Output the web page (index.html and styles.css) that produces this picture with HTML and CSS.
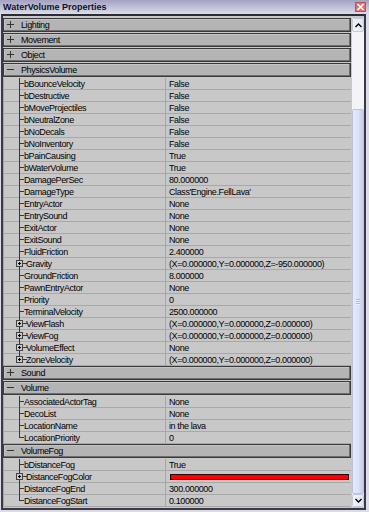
FILE: index.html
```html
<!DOCTYPE html>
<html lang="en">
<head>
    <meta charset="UTF-8">
    <title>WaterVolume Properties</title>
    <link rel="stylesheet" href="styles.css">
</head>
<body>
    <div class="titlebar">
        <span class="title">WaterVolume Properties</span>
        <span class="close"><svg width="9" height="8" viewBox="0 0 9 8"><path d="M1.5 1l6 6M7.5 1l-6 6" stroke="#fff" stroke-width="1.6"/></svg></span>
    </div>

    <div class="panel">
        <div class="grid">
            <div class="cat"><svg class="sign" width="8" height="8"><path d="M0 3.5h7M3.5 0v7" stroke="#333"/></svg>Lighting</div>
            <div class="cat"><svg class="sign" width="8" height="8"><path d="M0 3.5h7M3.5 0v7" stroke="#333"/></svg>Movement</div>
            <div class="cat"><svg class="sign" width="8" height="8"><path d="M0 3.5h7M3.5 0v7" stroke="#333"/></svg>Object</div>
            <div class="cat"><svg class="sign" width="8" height="8"><path d="M0 3.5h7" stroke="#333"/></svg>PhysicsVolume</div>

            <div class="row"><div class="name">bBounceVelocity</div><div class="val">False</div></div>
            <div class="row"><div class="name">bDestructive</div><div class="val">False</div></div>
            <div class="row"><div class="name">bMoveProjectiles</div><div class="val">False</div></div>
            <div class="row"><div class="name">bNeutralZone</div><div class="val">False</div></div>
            <div class="row"><div class="name">bNoDecals</div><div class="val">False</div></div>
            <div class="row"><div class="name">bNoInventory</div><div class="val">False</div></div>
            <div class="row"><div class="name">bPainCausing</div><div class="val">True</div></div>
            <div class="row"><div class="name">bWaterVolume</div><div class="val">True</div></div>
            <div class="row"><div class="name">DamagePerSec</div><div class="val">80.000000</div></div>
            <div class="row"><div class="name">DamageType</div><div class="val">Class'Engine.FellLava'</div></div>
            <div class="row"><div class="name">EntryActor</div><div class="val">None</div></div>
            <div class="row"><div class="name">EntrySound</div><div class="val">None</div></div>
            <div class="row"><div class="name">ExitActor</div><div class="val">None</div></div>
            <div class="row"><div class="name">ExitSound</div><div class="val">None</div></div>
            <div class="row"><div class="name">FluidFriction</div><div class="val">2.400000</div></div>
            <div class="row exp"><div class="name"><span class="box"></span>Gravity</div><div class="val">(X=0.000000,Y=0.000000,Z=-950.000000)</div></div>
            <div class="row"><div class="name">GroundFriction</div><div class="val">8.000000</div></div>
            <div class="row"><div class="name">PawnEntryActor</div><div class="val">None</div></div>
            <div class="row"><div class="name">Priority</div><div class="val">0</div></div>
            <div class="row"><div class="name">TerminalVelocity</div><div class="val">2500.000000</div></div>
            <div class="row exp"><div class="name"><span class="box"></span>ViewFlash</div><div class="val">(X=0.000000,Y=0.000000,Z=0.000000)</div></div>
            <div class="row exp"><div class="name"><span class="box"></span>ViewFog</div><div class="val">(X=0.000000,Y=0.000000,Z=0.000000)</div></div>
            <div class="row exp"><div class="name"><span class="box"></span>VolumeEffect</div><div class="val">None</div></div>
            <div class="row exp last"><div class="name"><span class="box"></span>ZoneVelocity</div><div class="val">(X=0.000000,Y=0.000000,Z=0.000000)</div></div>

            <div class="cat"><svg class="sign" width="8" height="8"><path d="M0 3.5h7M3.5 0v7" stroke="#333"/></svg>Sound</div>
            <div class="cat"><svg class="sign" width="8" height="8"><path d="M0 3.5h7" stroke="#333"/></svg>Volume</div>

            <div class="row"><div class="name">AssociatedActorTag</div><div class="val">None</div></div>
            <div class="row"><div class="name">DecoList</div><div class="val">None</div></div>
            <div class="row"><div class="name">LocationName</div><div class="val">in the lava</div></div>
            <div class="row last"><div class="name">LocationPriority</div><div class="val">0</div></div>

            <div class="cat"><svg class="sign" width="8" height="8"><path d="M0 3.5h7" stroke="#333"/></svg>VolumeFog</div>

            <div class="row"><div class="name">bDistanceFog</div><div class="val">True</div></div>
            <div class="row exp"><div class="name"><span class="box"></span>DistanceFogColor</div><div class="val"><span class="color"></span></div></div>
            <div class="row"><div class="name">DistanceFogEnd</div><div class="val">300.000000</div></div>
            <div class="row last"><div class="name">DistanceFogStart</div><div class="val">0.100000</div></div>
        </div>

        <div class="scroll">
            <div class="btn"><svg width="7" height="5" viewBox="0 0 7 5"><path d="M0.5 4L3.5 1l3 3" fill="none" stroke="#000" stroke-width="1.4"/></svg></div>
            <div class="track">
                <div class="thumb"><span class="grip"></span></div>
            </div>
            <div class="btn"><svg width="7" height="5" viewBox="0 0 7 5"><path d="M0.5 1l3 3l3-3" fill="none" stroke="#000" stroke-width="1.4"/></svg></div>
        </div>
    </div>
</body>
</html>
```

FILE: styles.css
```css
body {
    margin: 0;
    background-color: #dcdce8;
    font-family: "Liberation Sans", Arial, sans-serif;
    font-size: 9px;
    letter-spacing: -0.4px;
    color: #000;
}
.titlebar {
    height: 14px;
    display: flex;
    align-items: center;
    padding-left: 3px;
    background: linear-gradient(#a2a2c2, #dcdcea);
}
.title {
    font-size: 9px;
    font-weight: bold;
    letter-spacing: 0;
    color: #101020;
}
.close {
    margin-left: auto;
    margin-right: 3px;
    width: 11px;
    height: 10px;
    box-sizing: border-box;
    display: flex;
    align-items: center;
    justify-content: center;
    background-color: #e27272;
    border: 1px solid #c45050;
}
.panel {
    display: flex;
    margin: 0 3px 2px 1px;
    padding: 2px 0 1px 0;
    border: 2px solid #3a3a44;
    border-top-color: #2c2c34;
    background-color: #c8c8c8;
}
.grid {
    width: 348px;
}
.cat {
    height: 14px;
    box-sizing: border-box;
    margin-bottom: 1px;
    display: flex;
    align-items: center;
    padding-left: 3px;
    border: 1px solid #3a3a3a;
    background-color: #b4b4b4;
    box-shadow: inset -1px -1px 0 #6e6e6e, inset 1px 1px 0 #c4c4c4;
}
.cat .sign {
    margin-right: 6px;
}
.row {
    display: flex;
    height: 12px;
}
.name {
    width: 163px;
    box-sizing: border-box;
    display: flex;
    align-items: center;
    padding-left: 20px;
    border-left: 1px solid #a6a6a6;
    border-right: 1px solid #a6a6a6;
    background:
        linear-gradient(#383838, #383838) 15px 0 / 1px 100% no-repeat,
        linear-gradient(#383838, #383838) 15px 5px / 5px 1px no-repeat,
        linear-gradient(#a8a8a8, #a8a8a8) 0 100% / 100% 1px no-repeat,
        #c8c8c8;
    white-space: nowrap;
}
.last .name {
    background-size: 1px 6px, 5px 1px, 100% 1px;
}
.exp .name {
    padding-left: 12px;
    background-size: 1px 100%, 8px 1px, 100% 1px;
}
.exp.last .name {
    background-size: 1px 6px, 8px 1px, 100% 1px;
}
.box {
    width: 7px;
    height: 7px;
    box-sizing: border-box;
    margin-right: 3px;
    margin-top: -1px;
    border: 1px solid #444;
    background:
        linear-gradient(#000, #000) center / 3px 1px no-repeat,
        linear-gradient(#000, #000) center / 1px 3px no-repeat,
        #c8c8c8;
}
.val {
    flex: 1;
    display: flex;
    align-items: center;
    padding-left: 3px;
    background: linear-gradient(#a8a8a8, #a8a8a8) 0 100% / 100% 1px no-repeat, #c8c8c8;
    white-space: nowrap;
}
.color {
    flex: 1;
    height: 6px;
    margin: -1px 2px 0 1px;
    box-sizing: border-box;
    border: 1px solid #3a0000;
    background-color: #ff0000;
}
.scroll {
    width: 12px;
    margin-left: 1px;
    display: flex;
    flex-direction: column;
    background-color: #f3f3f8;
}
.btn {
    height: 13px;
    box-sizing: border-box;
    display: flex;
    align-items: center;
    justify-content: center;
    border: 1px solid #c4c8de;
    border-radius: 2px;
    background: linear-gradient(90deg, #f4f5fc, #e2e5f4);
}
.btn:first-child {
    height: 14px;
}
.track {
    flex: 1;
    display: flex;
    flex-direction: column;
    padding-top: 77px;
}
.thumb {
    flex: 1;
    display: flex;
    align-items: center;
    justify-content: center;
    border: 1px solid #bcc2e0;
    border-radius: 2px;
    background: linear-gradient(90deg, #e6e9f8, #dde1f5 55%, #c4cbec);
}
.grip {
    width: 4px;
    height: 6px;
    background: repeating-linear-gradient(#b4b8cc 0 1px, #eef0fa 1px 2px);
}
```
